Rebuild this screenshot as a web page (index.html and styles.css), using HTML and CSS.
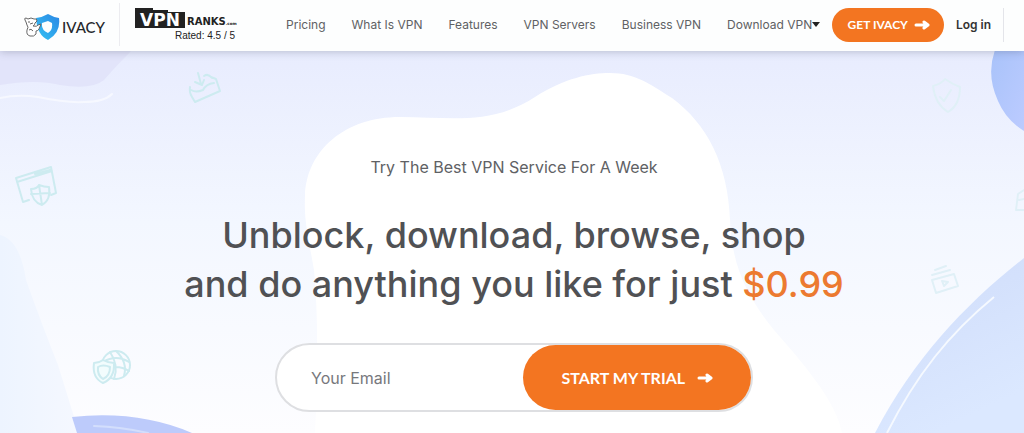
FILE: index.html
```html
<!DOCTYPE html>
<html lang="en">
<head>
  <meta charset="UTF-8">
  <meta name="viewport" content="width=device-width, initial-scale=1.0">
  <title>Ivacy VPN</title>
  <link rel="stylesheet" href="styles.css">
</head>
<body>
  <header class="header">
    <a class="logo" href="#">
      <svg class="logo-icon" viewBox="0 0 36 28" aria-hidden="true">
        <defs>
          <linearGradient id="shield" x1="0" y1="1" x2="1" y2="0">
            <stop offset="0" stop-color="#35c3f3"/>
            <stop offset="1" stop-color="#2a86e4"/>
          </linearGradient>
        </defs>
        <path fill="url(#shield)" fill-rule="evenodd" d="M12 5 Q19 4 24 1 Q29 4 35 5 Q37 20 24 27 Q13 22 12 5Z M18 10 Q17 17 24 20 Q29 17 28 10 L24 8Z"/>
        <path fill="#fff" stroke="#666" stroke-width="1" stroke-linejoin="round" d="M1 7 Q0 5 2 5 L4 6 Q7 4 10 6 Q13 5 13 8 L11 10 Q11 12 9 13 Q13 14 14 12 L17 11 L15 16 Q14 18 12 18 L12 21 Q10 24 6 23 Q2 22 3 17 Q5 14 3 12 L2 9Z"/>
        <path fill="none" stroke="#666" stroke-width="1" d="M4 9 L6 9 M6 11 L9 10 M5 17 Q7 15 9 18"/>
      </svg>
      <span class="logo-name">IVACY</span>
    </a>
    <div class="rating">
      <div class="rating-brand">
        <svg class="rating-icon" viewBox="0 0 50 21" role="img" aria-label="VPN">
          <path fill="#222" d="M0 0 H18 V2 H33 V4 H50 V20 H0Z"/>
          <text class="rating-vpn" x="25" y="18" text-anchor="middle">VPN</text>
        </svg>
        <span class="rating-ranks">RANKS<small>.com</small></span>
      </div>
      <span class="rating-score">Rated: 4.5 / 5</span>
    </div>
    <nav class="nav">
      <a href="#">Pricing</a>
      <a href="#">What Is VPN</a>
      <a href="#">Features</a>
      <a href="#">VPN Servers</a>
      <a href="#">Business VPN</a>
      <a class="nav-drop" href="#">Download VPN<svg class="caret" viewBox="0 0 8 5" aria-hidden="true"><path d="M0 0 H8 L4 5Z"/></svg></a>
    </nav>
    <div class="account">
      <a class="btn btn-small" href="#">GET IVACY
        <svg class="arrow" viewBox="0 0 16 12" aria-hidden="true"><path d="M2 6 H13 M10 3 L14 6 L10 9"/></svg>
      </a>
      <a class="login" href="#">Log in</a>
    </div>
  </header>

  <main class="hero">
    <svg class="hero-art" viewBox="0 51 1024 382" preserveAspectRatio="xMidYMin slice" aria-hidden="true">
      <defs>
        <linearGradient id="sky" x1="0" y1="0" x2="0" y2="1">
          <stop offset="0" stop-color="#e8ecfe"/>
          <stop offset="0.45" stop-color="#f3f7ff"/>
          <stop offset="1" stop-color="#fdfdff"/>
        </linearGradient>
        <linearGradient id="ball" x1="0" y1="0" x2="1" y2="1">
          <stop offset="0" stop-color="#a9c3fa"/>
          <stop offset="1" stop-color="#bccbff"/>
        </linearGradient>
        <linearGradient id="hill" x1="0" y1="0" x2="0.4" y2="1">
          <stop offset="0" stop-color="#cfdcfa"/>
          <stop offset="1" stop-color="#dbe8ff"/>
        </linearGradient>
        <linearGradient id="edge" x1="0" y1="0" x2="1" y2="0">
          <stop offset="0" stop-color="#edf4ff"/>
          <stop offset="1" stop-color="#f5f8ff"/>
        </linearGradient>
      </defs>
      <rect y="50" width="1024" height="383" fill="url(#sky)"/>
      <path fill="url(#edge)" d="M0 235 Q20 240 26 280 Q42 325 58 365 L79 433 H0Z"/>
      <path fill="#e2e4fa" d="M0 50 H132 Q116 66 104 80 Q92 90 60 85 Q36 79 0 85Z"/>
      <path class="wave" d="M0 98 Q18 94 38 97 Q66 103 84 102 Q104 102 112 94"/>
      <path fill="#fff" d="M305 195 C307 150 345 117 400 117 C450 117 490 126 535 97 C565 78 590 73 610 73 C635 73 650 84 672 98 C707 124 728 164 730 220 C732 270 750 300 774 330 C800 360 836 400 842 433 H315 C318 370 318 310 314 270 C307 230 304 220 305 195Z"/>
      <path fill="url(#ball)" d="M995 50 Q986 75 998 101 Q1006 120 1024 131 V50Z"/>
      <path fill="url(#hill)" d="M1024 258 C970 300 914 357 875 433 H1024Z"/>
      <path fill="none" stroke="#f5f9ff" stroke-width="2" d="M994 297 C950 333 916 375 887 433"/>
      <path fill="#bdcbfb" d="M72 417 Q138 410 192 433 H77Z"/>
      <path class="wave wave-low" d="M94 426 Q122 427 148 433"/>

      <g class="doodle">
        <path d="M190 87 Q189 92 192 97 L195 102 L220 91 L216 79 L211 77 M191 90 Q196 93 203 90 Q206 84 214 83 M198 73 L201 84 M195 82 L202 85 L204 80 M204 76 Q208 73 212 78"/>
        <path d="M16 178 L51 167 L56 193 L51 195 M16 178 L23 202 L29 200 M17 182 L52 171 M35 174 L50 170"/>
        <path d="M31 189 Q37 189 39 185 Q44 187 49 187 Q51 200 42 205 Q32 202 31 189Z M39 185 L42 205 M31 194 L50 193"/>
        <circle cx="116" cy="365" r="14"/>
        <path d="M103 362 Q116 354 129 362 M103 371 Q116 363 129 371 M110 352 Q119 365 114 379 M116 351 Q128 362 124 376"/>
        <path class="doodle-shield" d="M94 363 Q99 363 103 360 Q108 363 114 363 Q115 378 103 383 Q92 378 94 363Z"/>
        <path d="M98 367 Q103 364 110 367 Q110 376 103 379 Q97 375 98 367Z"/>
      </g>
      <g class="doodle doodle-faint">
        <path d="M933 86 Q941 84 945 79 Q952 84 960 87 Q960 105 948 112 Q935 104 933 86Z M940 97 L944 101 L951 90"/>
        <path d="M1024 190 L1018 194 L1016 210 H1024 M1019 200 L1024 199"/>
        <path d="M932 280 L954 274 L958 286 L936 293Z M932 275 L950 270 M935 270 L946 266 M942 281 L948 282 L944 286Z"/>
      </g>
    </svg>

    <div class="hero-content">
      <p class="tagline">Try The Best VPN Service For A Week</p>
      <h1 class="headline">Unblock, download, browse, shop<br>and do anything you like for just <span class="price">$0.99</span></h1>
      <form class="trial" action="#" method="POST">
        <input class="trial-email" type="email" name="email" placeholder="Your Email" aria-label="Your Email" required>
        <button class="btn btn-large" type="submit">START MY TRIAL
          <svg class="arrow" viewBox="0 0 16 12" aria-hidden="true"><path d="M2 6 H13 M10 3 L14 6 L10 9"/></svg>
        </button>
      </form>
    </div>
  </main>
</body>
</html>
```

FILE: styles.css
```css
* {
  box-sizing: border-box;
}
body {
  display: flex;
  flex-direction: column;
  min-height: 100vh;
  margin: 0;
  font-family: Inter, "Liberation Sans", sans-serif;
  color: #505154;
}
a {
  color: inherit;
  text-decoration: none;
}

/* Header */
.header {
  position: relative;
  z-index: 1;
  display: flex;
  align-items: center;
  padding: 3px 20px 5px 24px;
  background-color: #fdfefe;
  box-shadow: 0 1px 8px rgba(60, 70, 90, 0.28);
}
.logo {
  display: flex;
  align-items: center;
  height: 43px;
  padding: 4px 14px 0 0;
  border-right: 1px solid #ececf0;
}
.logo-icon {
  width: 36px;
  height: 28px;
}
.logo-name {
  margin-left: 2px;
  font: 500 15px Lato, sans-serif;
  color: #26282c;
}
.rating {
  display: flex;
  flex-direction: column;
  width: 104px;
  margin-left: 15px;
  color: #222;
}
.rating-brand {
  display: flex;
  align-items: flex-end;
  gap: 2px;
}
.rating-icon {
  width: 50px;
  height: 21px;
}
.rating-vpn {
  font: bold 17px "DejaVu Sans", sans-serif;
  fill: #fff;
}
.rating-ranks {
  font: bold 10px/10px "DejaVu Sans", sans-serif;
}
.rating-ranks small {
  font-size: 4px;
}
.rating-score {
  align-self: flex-end;
  margin-right: 4px;
  font: 10px/13px "Liberation Sans", sans-serif;
  white-space: nowrap;
}
.nav {
  display: flex;
  gap: 26px;
  margin-left: 47px;
  font-size: 12px;
  color: #606164;
  white-space: nowrap;
}
.nav-drop {
  display: flex;
  align-items: center;
}
.caret {
  width: 8px;
  height: 5px;
  fill: #222;
}
.account {
  display: flex;
  align-items: center;
  gap: 12px;
  margin-left: auto;
  padding-right: 12px;
  border-right: 1px solid #e4e5ea;
  white-space: nowrap;
}
.login {
  font-size: 12px;
  font-weight: 600;
  color: #333;
}

/* Buttons */
.btn {
  display: flex;
  align-items: center;
  justify-content: center;
  border: none;
  border-radius: 40px;
  background-color: #f37521;
  color: #fff;
  font-family: Lato, sans-serif;
  font-weight: 700;
  cursor: pointer;
}
.btn-small {
  gap: 6px;
  height: 34px;
  padding: 0 14px 0 16px;
  font-size: 12px;
}
.btn-large {
  gap: 12px;
  width: 48%;
  font-size: 16px;
}
.arrow {
  width: 16px;
  height: 12px;
  fill: none;
  stroke: #fff;
  stroke-width: 3;
  stroke-linecap: round;
  stroke-linejoin: round;
}

/* Hero */
.hero {
  position: relative;
  flex: 1;
  overflow: hidden;
}
.hero-art {
  position: absolute;
  inset: 0;
  width: 100%;
  height: 100%;
}
.wave {
  fill: none;
  stroke: #f6f8ff;
  stroke-width: 2;
  stroke-linecap: round;
}
.wave-low {
  stroke: #d3defc;
}
.doodle {
  fill: none;
  stroke: #cdebf0;
  stroke-width: 2;
  stroke-linecap: round;
  stroke-linejoin: round;
}
.doodle-shield {
  fill: #f2fcfd;
}
.doodle-faint {
  stroke: #e0f0f7;
}
.hero-content {
  position: relative;
  display: flex;
  flex-direction: column;
  align-items: center;
  padding: 104px 20px 20px 24px;
}
.tagline {
  margin: 0;
  font-size: 16px;
  line-height: 24px;
  color: #606164;
}
.headline {
  margin: 32px 0 34px;
  font-size: 36px;
  font-weight: 500;
  line-height: 49px;
  text-align: center;
}
.price {
  color: #ec7a30;
}
.trial {
  display: flex;
  width: 100%;
  max-width: 478px;
  height: 69px;
  border: 2px solid #dedfe2;
  border-radius: 40px;
  background-color: #fff;
}
.trial-email {
  flex: 1;
  min-width: 0;
  padding: 0 34px;
  border: none;
  border-radius: 40px;
  background: none;
  font: inherit;
  font-size: 16px;
}
.trial-email::placeholder {
  color: #77787c;
}
```
